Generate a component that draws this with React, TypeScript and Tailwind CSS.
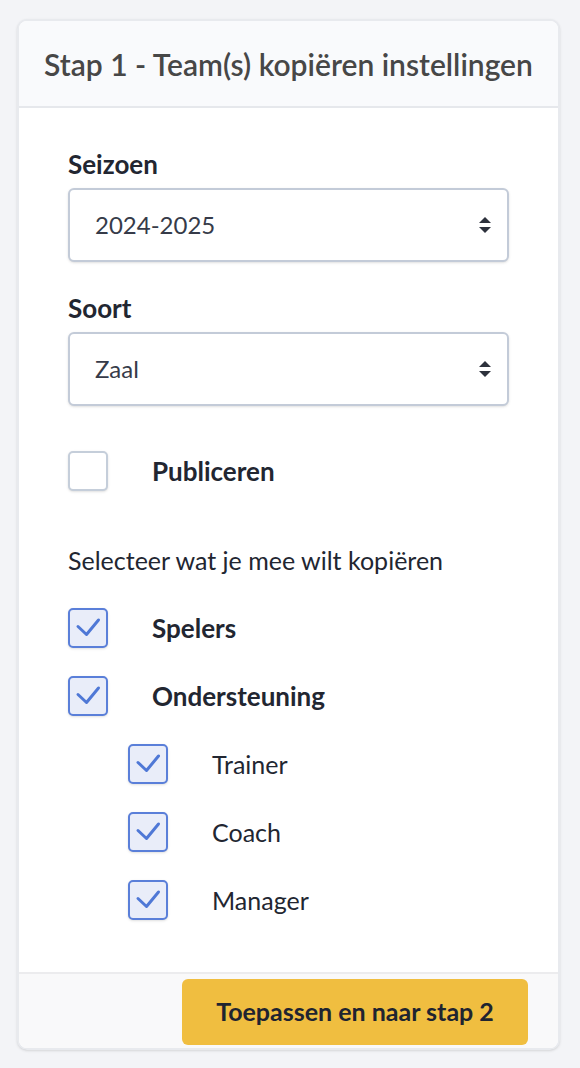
import React, { useState } from 'react';

const font = { fontFamily: 'Lato, "Noto Sans", sans-serif' };

function Check({ checked, onChange }: { checked: boolean; onChange: () => void }) {
  return (
    <button
      type="button"
      onClick={onChange}
      className={
        checked
          ? 'w-10 h-10 shrink-0 rounded-[5px] border-2 border-[#5a7fd9] bg-[#e9edf9] shadow-sm'
          : 'w-10 h-10 shrink-0 rounded-[5px] border-2 border-[#c5ceda] bg-white shadow-sm'
      }
    >
      {checked && (
        <svg width="36" height="36" viewBox="0 0 36 36" fill="none" className="block">
          <path d="M8 16.5l8.5 8L28.5 10" stroke="#4f78d6" strokeWidth="3" strokeLinecap="round" strokeLinejoin="round" />
        </svg>
      )}
    </button>
  );
}

function Select({ value, options }: { value: string; options: string[] }) {
  return (
    <div className="relative">
      <select
        defaultValue={value}
        className="w-full h-[74px] appearance-none rounded-[6px] border-2 border-[#c3cbd8] bg-white pl-[25px] pr-10 text-[24px] text-[#363b49] shadow-sm outline-none"
        style={font}
      >
        {options.map((o) => (
          <option key={o}>{o}</option>
        ))}
      </select>
      <svg className="absolute right-[17px] top-1/2 -translate-y-1/2 pointer-events-none" width="14" height="18" viewBox="0 0 14 18">
        <path d="M7 1L13 7H1z" fill="#2d313c" />
        <path d="M7 17L13 11H1z" fill="#2d313c" />
      </svg>
    </div>
  );
}

function Row({ checked, onChange, label, bold }: { checked: boolean; onChange: () => void; label: string; bold?: boolean }) {
  return (
    <div className="flex items-center gap-[44px] h-10">
      <Check checked={checked} onChange={onChange} />
      <span className={bold ? 'text-[26px] leading-8 font-bold' : 'text-[25px] leading-8'}>{label}</span>
    </div>
  );
}

export default function App() {
  const [publish, setPublish] = useState(false);
  const [checks, setChecks] = useState({ spelers: true, ondersteuning: true, trainer: true, coach: true, manager: true });

  const toggle = (k: keyof typeof checks) => setChecks({ ...checks, [k]: !checks[k] });

  return (
    <div className="min-h-[1068px] bg-[#f3f4f7] pt-[19px] px-[17px] pb-4" style={font}>
      <div className="w-[543px] rounded-[10px] border-2 border-[#e8eaee] bg-white overflow-hidden shadow-sm">
        <div className="h-[87px] bg-[#f9fafc] border-b-2 border-[#e6e8ec] flex items-center justify-center">
          <h2 className="text-[30px] leading-9 font-semibold text-[#474747]">Stap 1 - Team(s) kopiëren instellingen</h2>
        </div>

        <div className="px-[49px] pt-[40px] pb-[52px] text-[#222631]">
          <label className="block text-[26px] leading-8 font-bold mb-[8px]">Seizoen</label>
          <Select value="2024-2025" options={['2024-2025', '2023-2024']} />

          <label className="block text-[26px] leading-8 font-bold mt-[30px] mb-[8px]">Soort</label>
          <Select value="Zaal" options={['Zaal', 'Veld']} />

          <div className="mt-[45px]">
            <Row checked={publish} onChange={() => setPublish(!publish)} label="Publiceren" bold />
          </div>

          <p className="text-[25px] leading-8 mt-[53px]">Selecteer wat je mee wilt kopiëren</p>

          <div className="flex flex-col gap-[28px] mt-[32px]">
            <Row checked={checks.spelers} onChange={() => toggle('spelers')} label="Spelers" bold />
            <Row checked={checks.ondersteuning} onChange={() => toggle('ondersteuning')} label="Ondersteuning" bold />
            <div className="flex flex-col gap-[28px] pl-[60px]">
              <Row checked={checks.trainer} onChange={() => toggle('trainer')} label="Trainer" />
              <Row checked={checks.coach} onChange={() => toggle('coach')} label="Coach" />
              <Row checked={checks.manager} onChange={() => toggle('manager')} label="Manager" />
            </div>
          </div>
        </div>

        <div className="border-t-2 border-[#ececee] bg-[#f9f9fa] flex justify-end px-[30px] pt-[5px] pb-[3px]">
          <button
            type="button"
            className="h-[66px] w-[346px] rounded-[6px] bg-[#f0be40] text-[25px] font-bold text-[#1f2430]"
          >
            Toepassen en naar stap 2
          </button>
        </div>
      </div>
    </div>
  );
}
